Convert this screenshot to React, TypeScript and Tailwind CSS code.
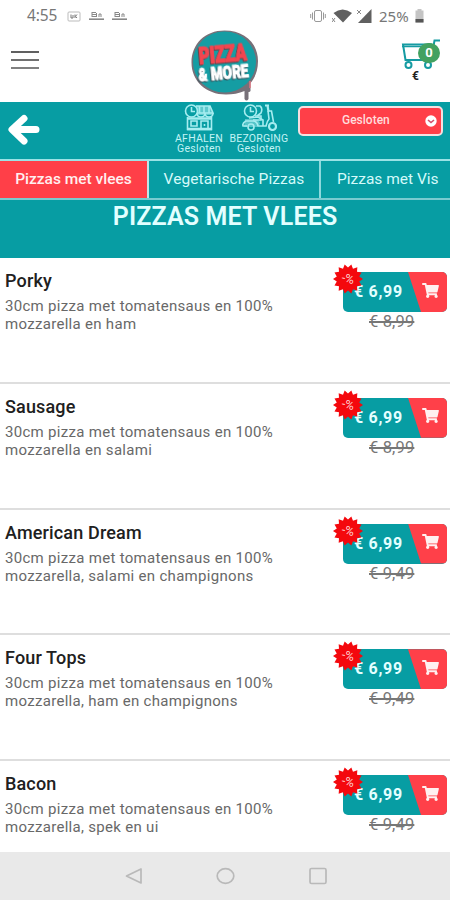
import React from 'react';
import { FaShoppingCart } from 'react-icons/fa';

type Pizza = {
  name: string;
  lines: [string, string];
  price: string;
  oldPrice: string;
};

const pizzas: Pizza[] = [
  {
    name: 'Porky',
    lines: ['30cm pizza met tomatensaus en 100%', 'mozzarella en ham'],
    price: '€ 6,99',
    oldPrice: '€ 8,99',
  },
  {
    name: 'Sausage',
    lines: ['30cm pizza met tomatensaus en 100%', 'mozzarella en salami'],
    price: '€ 6,99',
    oldPrice: '€ 8,99',
  },
  {
    name: 'American Dream',
    lines: ['30cm pizza met tomatensaus en 100%', 'mozzarella, salami en champignons'],
    price: '€ 6,99',
    oldPrice: '€ 9,49',
  },
  {
    name: 'Four Tops',
    lines: ['30cm pizza met tomatensaus en 100%', 'mozzarella, ham en champignons'],
    price: '€ 6,99',
    oldPrice: '€ 9,49',
  },
  {
    name: 'Bacon',
    lines: ['30cm pizza met tomatensaus en 100%', 'mozzarella, spek en ui'],
    price: '€ 6,99',
    oldPrice: '€ 9,49',
  },
];

// 14-point star for the discount badge
const burst = Array.from({ length: 28 })
  .map((_, i) => {
    const r = i % 2 === 0 ? 15 : 11.5;
    const a = (i * Math.PI) / 14;
    return `${(15 + r * Math.cos(a)).toFixed(2)},${(15 + r * Math.sin(a)).toFixed(2)}`;
  })
  .join(' ');

function StatusBar() {
  return (
    <div className="flex h-8 items-center justify-between pl-[27px] pr-[26px] text-[#777]">
      <div className="flex items-center">
        <span className="w-[40px] font-['Noto_Sans',sans-serif] text-[15.5px] leading-none tracking-[-0.1px]">
          4:55
        </span>
        <svg className="h-[11px] w-[14px]" viewBox="0 0 14 11" fill="none" stroke="#bbb">
          <rect x="1" y="1" width="12" height="9" rx="1" />
          <path d="M4 3.5v3.5h2V4M8 3.5V7M10 3.5L8.5 5.3L10 7" stroke="#777" />
        </svg>
        {[0, 1].map((i) => (
          <svg key={i} className="ml-2 h-[10px] w-[15px]" viewBox="0 0 15 10" fill="none" stroke="#888">
            <path d="M3 1.5h4M3 3.5h4M3 5.5h4M3 1v5M7.5 2v4M10 3v3M12 3v3M10 3h2" />
            <path d="M0 8.2h15" strokeWidth="1.6" />
          </svg>
        ))}
      </div>
      <div className="flex items-center">
        <svg className="h-[14px] w-[16px]" viewBox="0 0 16 14" fill="none" stroke="#999">
          <rect x="4.5" y="1.5" width="7" height="11" rx="1.5" />
          <path d="M2.5 3.5v7M.7 5v4M13.5 3.5v7M15.3 5v4" />
        </svg>
        <svg className="ml-[6px] h-[14px] w-[20px]" viewBox="0 0 20 14" fill="#606060">
          <path d="M1.5 4Q10.5 -3 20 4L11 13.5Z" />
          <path d="M0 9l3 4M3 9l-3 4" stroke="#888" />
        </svg>
        <svg className="ml-[4px] h-[15px] w-[16px]" viewBox="0 0 16 15" fill="#606060">
          <path d="M15.5 0V14H2Z" />
          <path d="M1 1l4 4M5 1L1 5" stroke="#888" />
        </svg>
        <span className="ml-[7px] w-[36px] font-['Noto_Sans',sans-serif] text-[15px] leading-none">25%</span>
        <svg className="h-[14px] w-[9px]" viewBox="0 0 9 14">
          <path d="M2.5 0h4v1.5H8.5V13.5H.5V1.5h2Z" fill="#c4c4c4" />
          <path d="M.5 10h8v3.5h-8Z" fill="#555" />
        </svg>
      </div>
    </div>
  );
}

function Logo() {
  return (
    <svg
      className="h-[73px] w-[72px]"
      viewBox="0 0 72 73"
      fontFamily="Roboto, sans-serif"
      fontWeight="900"
      strokeLinejoin="round"
    >
      <path
        d="M35.5 1.5C55 1.5 69 14 69 32C69 43 65 50 61.5 54V62Q60 64 58.5 62V57L59.5 59V70Q57.5 73 55.5 70V62Q47 65.5 37 65.5C17 65.5 2.5 52 2.5 33.5C2.5 15 16 1.5 35.5 1.5Z"
        fill="#777078"
      />
      <ellipse cx="35.5" cy="33" rx="31.5" ry="30.5" fill="#159da3" />
      <path d="M61 52v7" stroke="#df7480" strokeWidth="1.5" />
      <g transform="rotate(-5 36 34)">
        <text
          className="[filter:drop-shadow(-1px_1px_0_#66444c)]"
          x="10.5"
          y="33"
          fontSize="23"
          textLength="48"
          lengthAdjust="spacingAndGlyphs"
          fill="#f34650"
          stroke="#f34650"
          strokeWidth="1.2"
        >
          PIZZA
        </text>
        <text
          className="[filter:drop-shadow(-1px_1px_0_#344f58)]"
          x="8.5"
          y="50.5"
          fontSize="19"
          textLength="50"
          lengthAdjust="spacingAndGlyphs"
          fill="#fff"
          stroke="#fff"
          strokeWidth="1"
        >
          &amp; MORE
        </text>
      </g>
    </svg>
  );
}

function Header() {
  return (
    <div className="grid h-[70px] grid-cols-[1fr_72px_1fr]">
      <div className="flex flex-col gap-[6px] pl-[11px] pt-[19px]">
        <div className="h-[2px] w-7 bg-[#606060]" />
        <div className="h-[2px] w-7 bg-[#707070]" />
        <div className="h-[2px] w-7 bg-[#808080]" />
      </div>
      <div className="relative z-10 -mt-[3px]">
        <Logo />
      </div>
      <div className="flex flex-col items-end pr-[10px] pt-[6px]">
        <div className="relative h-[32px] w-[39px]">
          <svg className="h-[32px] w-[39px]" viewBox="0 0 39 32" fill="none" stroke="#159ba2" strokeWidth="2">
            <path d="M39 2.5H33.5L30 22H4.5L2 6.5H31" />
            <path d="M1 8.5H32" strokeWidth="1.5" />
            <circle cx="7.5" cy="27" r="3" />
            <circle cx="27" cy="27" r="3" />
          </svg>
          <div className="absolute left-[17px] top-[5px] flex h-[20px] w-[22px] items-center justify-center rounded-full bg-[#43a160] font-['Roboto',sans-serif] text-[13px] font-bold text-white">
            0
          </div>
        </div>
        <span className="mr-[21px] font-['Roboto',sans-serif] text-[12px] font-bold leading-[12px] text-[#222]">€</span>
      </div>
    </div>
  );
}

function ShopIcon() {
  return (
    <svg className="h-[27px] w-[30px]" viewBox="0 0 30 27" fill="none" stroke="#a6edf0" strokeWidth="1.6">
      <path d="M12 2H26L29 11H13.5Z" fill="#a6edf0" fillOpacity=".55" stroke="none" />
      <circle cx="7.5" cy="7" r="6" />
      <path d="M7.5 3v4.5H11M12 2H26L29 9H13.5M15.5 2v7M20 2v7M25 2v7" />
      <path d="M13 9q0 4 4 4t4-4q0 4 4 4t4-4M3.500 13v12.500H27.500V13" />
      <path d="M3 14.500H28M3 25H28" strokeWidth="2.400" />
      <path d="M7 17h6v5h-6ZM17 25v-8h7v8M20.500 20v2" />
    </svg>
  );
}

function ScooterIcon() {
  return (
    <svg className="h-[27px] w-[35px]" viewBox="0 0 35 27" fill="none" stroke="#a6edf0" strokeWidth="1.6">
      <path d="M3 15h9q6 1 6 5l-3 3H2Z" fill="#a6edf0" fillOpacity=".5" stroke="none" />
      <circle cx="8.5" cy="7" r="6" />
      <path d="M8.5 3v4.5H12M14 2h4q3 2 1 7l-4 3M13 12h6v4h-8" />
      <path d="M23 1.5h4M25.500 1.500l1 6" strokeWidth="2.200" />
      <path d="M26 7h3.500l2 11M26 7l1 8q-2 2-3 7H16q-1-5-5-5H4q-4 2-3 5h4M7 14l9-1 5 3v6" />
      <circle cx="9" cy="23" r="3" />
      <circle cx="30.500" cy="22.500" r="3.500" strokeWidth="2.200" />
    </svg>
  );
}

function ActionBar() {
  return (
    <div className="flex h-[59px] border-b-2 border-[#9be2e5]">
      <div className="w-[172px] pl-[7px] pt-[12px]">
        <svg
          className="h-[31px] w-[33px]"
          viewBox="0 0 33 31"
          fill="none"
          stroke="#fff"
          strokeWidth="7"
          strokeLinecap="round"
          strokeLinejoin="round"
        >
          <path d="M17 4.5L5 15.5L17 27M6 15.5H29" />
        </svg>
      </div>
      <div className="flex w-[54px] flex-col items-center pt-[2px] font-['Roboto',sans-serif] text-[10.5px] leading-[10px] text-[#c2f4f5]">
        <ShopIcon />
        <span className="mt-[3px] tracking-[0.25px]">AFHALEN</span>
        <span className="tracking-[0.3px]">Gesloten</span>
      </div>
      <div className="ml-[2px] flex w-[62px] flex-col items-center pt-[2px] font-['Roboto',sans-serif] text-[10.5px] leading-[10px] text-[#c2f4f5]">
        <ScooterIcon />
        <span className="mt-[3px] tracking-[0.2px]">BEZORGING</span>
        <span className="tracking-[0.3px]">Gesloten</span>
      </div>
      <div className="ml-[8px] mt-1 flex h-[30px] w-[145px] items-center rounded-[5px] border-2 border-[#f5dfe0] bg-[#ff3f48] pl-[42px] pr-[4px]">
        <span className="flex-1 pb-[2px] font-['Roboto',sans-serif] text-[12px] font-medium text-[#ffdcdc]">
          Gesloten
        </span>
        <svg className="h-[12px] w-[12px]" viewBox="0 0 12 12">
          <circle cx="6" cy="6" r="5.7" fill="#fff" />
          <path d="M3 5l3 2.5L9 5" fill="none" stroke="#d64d69" strokeWidth="1.6" />
        </svg>
      </div>
    </div>
  );
}

function Tabs() {
  return (
    <div className="flex h-[39px] overflow-hidden whitespace-nowrap border-b-2 border-[#79cbd0] font-['Roboto',sans-serif] text-[15.5px] text-[#d5fafa]">
      <div className="flex w-[149px] shrink-0 items-center justify-center border-r-2 border-[#c2e4e6] bg-[#ff3f48] font-medium text-[#fff0f0]">
        Pizzas met vlees
      </div>
      <div className="flex w-[172px] shrink-0 items-center justify-center border-r-2 border-[#8ed9dd] tracking-[0.08px]">
        Vegetarische Pizzas
      </div>
      <div className="flex shrink-0 items-center pl-[16px]">Pizzas met Vis</div>
    </div>
  );
}

function PizzaRow({ pizza }: { pizza: Pizza }) {
  return (
    <div className="flex h-[125.75px] justify-between border-b-2 border-[#dedede] pl-[5px] pr-[3px] font-['Roboto',sans-serif]">
      <div className="pt-[12px]">
        <h2 className="text-[18px] font-medium leading-[22px] tracking-[0.15px] text-[#202020]">{pizza.name}</h2>
        <p className="mt-[5px] whitespace-nowrap text-[15px] leading-[18px] tracking-[0.3px] text-[#686868]">
          {pizza.lines[0]}
          <br />
          {pizza.lines[1]}
        </p>
      </div>
      <div className="relative w-[104px] pt-[14px]">
        <div className="flex h-[40px] overflow-hidden rounded-[5px] bg-[#079da3]">
          <span className="w-[65px] pl-[11px] text-[16px] font-bold leading-[40px] tracking-[0.7px] text-[#e4ffff]">
            {pizza.price}
          </span>
          <div className="flex flex-1 items-center justify-end bg-[#ff4049] pr-[8px] [clip-path:polygon(0_0,100%_0,100%_100%,13px_100%)]">
            <FaShoppingCart className="mb-[4px] h-[15px] w-[17px] text-[#fff0f0]" />
          </div>
        </div>
        <div className="pl-[26px] text-[16.5px] leading-[19px] tracking-[0.15px] text-[#777] line-through decoration-[#777] decoration-[1.5px]">
          {pizza.oldPrice}
        </div>
        <svg className="absolute -left-[10px] top-[6px] h-[30px] w-[30px]" viewBox="0 0 30 30">
          <polygon points={burst} fill="#f4080d" />
          <text
            x="15"
            y="19"
            textAnchor="middle"
            fontSize="12.5"
            fontFamily="Roboto, sans-serif"
            fill="#ffd2d2"
            transform="rotate(12 15 15)"
          >
            -%
          </text>
        </svg>
      </div>
    </div>
  );
}

function NavBar() {
  return (
    <div className="flex h-12 shrink-0 items-center bg-[#e9e9e9] pl-[125px]">
      <svg className="h-[18px] w-[204px]" viewBox="0 0 204 18" fill="none" stroke="#b9b9b9" strokeWidth="1.7">
        <path d="M1.5 9L16 2V16Z" strokeLinejoin="round" />
        <ellipse cx="100.5" cy="9" rx="8.3" ry="7.3" />
        <rect x="185" y="1.5" width="16" height="15" rx="1.5" />
      </svg>
    </div>
  );
}

export default function App() {
  return (
    <div className="flex h-[900px] w-[450px] flex-col overflow-hidden bg-white">
      <StatusBar />
      <Header />
      <div className="shrink-0 bg-[#079da3]">
        <ActionBar />
        <Tabs />
        <h1 className="h-[58px] pt-[2px] text-center font-['Roboto',sans-serif] text-[25px] font-semibold leading-[30px] tracking-[0.15px] text-[#e2ffff]">
          PIZZAS MET VLEES
        </h1>
      </div>
      <div className="min-h-0 flex-1 overflow-hidden">
        {pizzas.map((p) => (
          <PizzaRow key={p.name} pizza={p} />
        ))}
      </div>
      <NavBar />
    </div>
  );
}
